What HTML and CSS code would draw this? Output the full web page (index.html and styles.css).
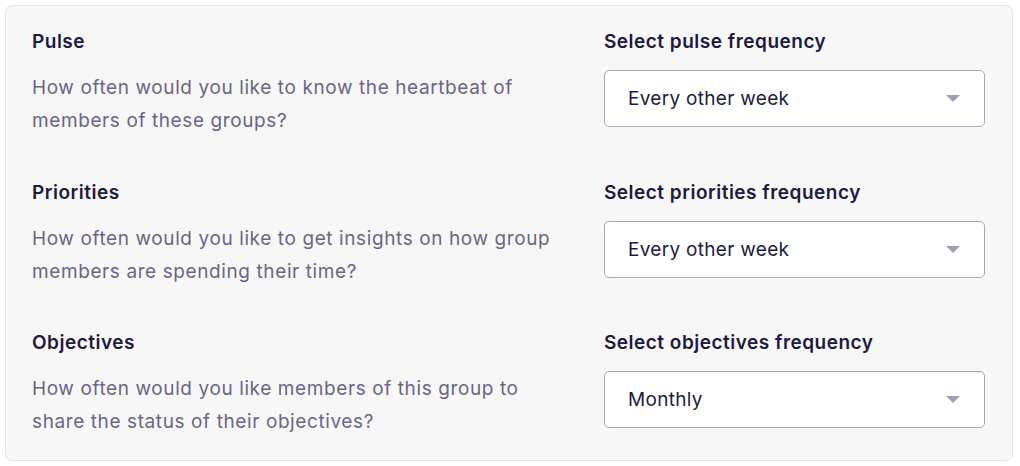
FILE: index.html
```html
<!DOCTYPE html>
<html>
<head>
<meta charset="utf-8">
<link rel="stylesheet" href="styles.css">
</head>
<body>
<div class="card">
  <div class="row">
    <div class="info">
      <div class="title">Pulse</div>
      <p class="desc">How often would you like to know the heartbeat of members of these groups?</p>
    </div>
    <div class="field">
      <div class="label">Select pulse frequency</div>
      <div class="select"><span>Every other week</span><span class="caret"></span></div>
    </div>
  </div>
  <div class="row">
    <div class="info">
      <div class="title">Priorities</div>
      <p class="desc">How often would you like to get insights on how group members are spending their time?</p>
    </div>
    <div class="field">
      <div class="label">Select priorities frequency</div>
      <div class="select"><span>Every other week</span><span class="caret"></span></div>
    </div>
  </div>
  <div class="row">
    <div class="info">
      <div class="title">Objectives</div>
      <p class="desc">How often would you like members of this group to share the status of their objectives?</p>
    </div>
    <div class="field">
      <div class="label">Select objectives frequency</div>
      <div class="select"><span>Monthly</span><span class="caret"></span></div>
    </div>
  </div>
</div>
</body>
</html>
```

FILE: styles.css
```css
html, body {
  margin: 0;
  padding: 0;
  background: #ffffff;
}
body {
  padding: 5px 7px 6px 5px;
  font-family: "Inter", "Lato", sans-serif;
}
.card {
  background: #f7f7f7;
  border: 1px solid #e4e4e8;
  border-radius: 7px;
  padding: 24px 27px 22px 26px;
  display: flex;
  flex-direction: column;
  gap: 43.5px;
}
.row {
  display: grid;
  grid-template-columns: 1fr 381px;
  column-gap: 40px;
}
.title, .label {
  font-size: 19px;
  line-height: 24px;
  font-weight: 600;
  color: #1d1a3f;
  letter-spacing: 0.5px;
}
.desc {
  margin: 17px 0 0;
  font-size: 19px;
  line-height: 33px;
  color: #6b6585;
  letter-spacing: 0.6px;
  max-width: 530px;
}
.select {
  margin-top: 16px;
  height: 57px;
  box-sizing: border-box;
  background: #ffffff;
  border: 1px solid #aaa6c0;
  border-radius: 5px;
  display: flex;
  align-items: center;
  justify-content: space-between;
  padding: 0 24px 0 23px;
  font-size: 19px;
  letter-spacing: 0.3px;
  color: #1d1a3f;
}
.caret {
  width: 0;
  height: 0;
  border-left: 7px solid transparent;
  border-right: 7px solid transparent;
  border-top: 7px solid #a19db2;
}
```
